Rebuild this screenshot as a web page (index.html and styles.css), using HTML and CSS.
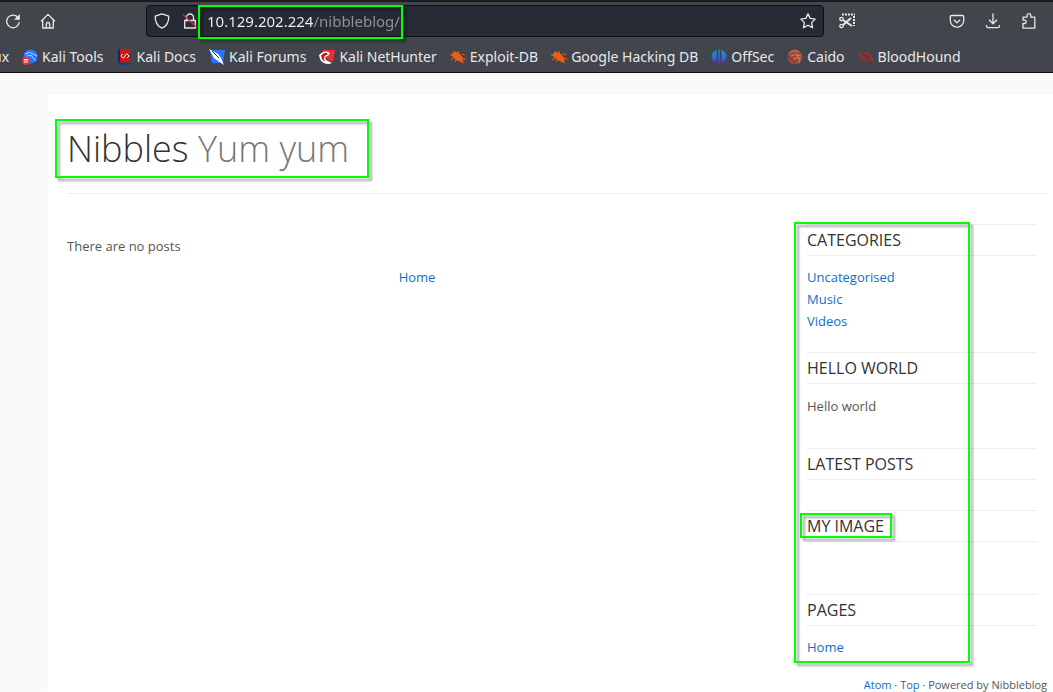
FILE: index.html
```html
<!DOCTYPE html>
<html lang="en">
<head>
<meta charset="utf-8">
<title>Nibbles - Yum yum</title>
<link rel="stylesheet" href="styles.css">
</head>
<body>
<header class="browser">
  <div class="toolbar">
    <button class="tool" type="button" aria-label="Reload"><svg class="icon" viewBox="0 0 16 16"><path d="M13.200 4.800A6.300 6.300 0 1 0 14.300 9"/><path d="M14.800 1v5.800H9z" fill="currentColor" stroke="none"/></svg></button>
    <button class="tool tool-home" type="button" aria-label="Home"><svg class="icon" viewBox="0 0 16 16"><path d="M1 8.200 8 1.400l7 6.800M2.700 7v8h10.600V7M6.300 15v-3.800a1.700 1.700 0 0 1 3.400 0V15"/></svg></button>
    <div class="urlbar">
      <svg class="icon" viewBox="0 0 16 16"><path d="M8 .9 14.700 3.200c.3 5.200-1.600 9.600-6.700 12C2.900 12.800 1 8.400 1.300 3.200z"/></svg>
      <svg class="icon icon-lock" viewBox="0 0 16 16"><path d="M4.500 7.500V4.500a3.500 3.500 0 0 1 7 0v3M2.700 7.500h10.600V15H2.700z"/><path d="M1 1.500 15 14.500" stroke="#e22850"/></svg>
      <div class="address">
        <input class="address-input" type="text" value="10.129.202.224/nibbleblog/" aria-label="Address">
        <span class="mark mark-address"></span>
      </div>
      <button class="tool" type="button" aria-label="Bookmark this page"><svg class="icon" viewBox="0 0 16 16"><path d="m8 .9 2.200 4.500 5 .7-3.600 3.500.9 5L8 12.200l-4.500 2.400.9-5L.8 6.100l5-.7z"/></svg></button>
    </div>
    <button class="tool tool-clip" type="button" aria-label="Screenshot"><svg class="icon" viewBox="0 0 16 16"><path d="M3 1.500h13M15 3v10" stroke-width="2" stroke-dasharray="2 1"/><circle cx="2.500" cy="6" r="1.700"/><circle cx="2.500" cy="13" r="1.700"/><path d="m4 7 9 6M4 12l8-7" stroke-width="2"/></svg></button>
    <div class="tools-end">
      <button class="tool" type="button" aria-label="Save to Pocket"><svg class="icon" viewBox="0 0 16 16"><path d="M2.500 2.500h11q1.200 0 1.200 1.200V7.500a6.700 6.700 0 0 1-13.400 0V3.700q0-1.200 1.200-1.200z"/><path d="M4.800 6.700 8 9.700l3.200-3"/></svg></button>
      <button class="tool" type="button" aria-label="Downloads"><svg class="icon" viewBox="0 0 16 16"><path d="M8 .5v10M4 6.800l4 4 4-4M1.500 12v1q0 1.700 1.700 1.700h9.600q1.700 0 1.700-1.700v-1"/></svg></button>
      <button class="tool" type="button" aria-label="Extensions"><svg class="icon" viewBox="0 0 16 16"><path d="M2 15.200v-4.700h1.500a1.700 1.700 0 0 0 0-3.400H2V4.200h4V2.600a1.900 1.900 0 0 1 3.800 0v1.600h4v11z"/></svg></button>
    </div>
  </div>
  <nav class="bookmarks" aria-label="Bookmarks">
    <a class="bookmark bookmark-cut" href="#">ux</a>
    <a class="bookmark" href="#"><svg class="fav" viewBox="0 0 16 16"><circle cx="8.500" cy="7.500" r="7" fill="#2777ff"/><path d="M3 5q5-3 8 0l4 2M5 7q5-2 6 2l3 3" stroke="#bcd6ff" fill="none"/><circle cx="4" cy="12" r="4" fill="#e33"/><path d="M2 10.500h4M3 10.500V14M5 10.500V14" stroke="#fff"/></svg>Kali Tools</a>
    <a class="bookmark" href="#"><svg class="fav" viewBox="0 0 16 16"><path d="M1 0h12v15H1z" fill="#d31212"/><path d="M1 0h2v15H1z" fill="#0b2d70"/><path d="M1 13.500h12V16H1z" fill="#16408f"/><path d="m5.500 5-1.500 2 2 2M10 5l2 2-2 2M9.500 4.500 6.500 9.500" stroke="#fff" fill="none"/></svg>Kali Docs</a>
    <a class="bookmark" href="#"><svg class="fav" viewBox="0 0 16 16"><path d="M1 1h15l-2 13H3z" fill="#2777ff"/><path d="M0 0 9 5l3 4 3 7-6-4-4-3z" fill="#fff"/><path d="m3 2 7 7" stroke="#333"/></svg>Kali Forums</a>
    <a class="bookmark" href="#"><svg class="fav" viewBox="0 0 16 16"><path d="M3 1h13l-2 12-6-3z" fill="#f02b35"/><path d="M0 6q6-6 11-2l-2 3q-4 0-2 4l6 3-3 1q-7 0-9-5z" fill="#fff"/><path d="M2 6.500q5-5 7-1-6 1-3 7-3-1-4-6z" fill="#c9101c"/></svg>Kali NetHunter</a>
    <a class="bookmark" href="#"><svg class="fav" viewBox="0 0 16 16"><path d="M2 4q5-3 9 2 3 4 2 7-5 0-9-4Q1 7 2 4z" fill="#ee5d16"/><path d="m0 6 4 1m0-5 2 4m2-4 1 4m3-1 3 1m-4 3 5 1M1 11l4-3m0 5 2-4m3 3 4 2" stroke="#ee5d16"/></svg>Exploit-DB</a>
    <a class="bookmark" href="#"><svg class="fav" viewBox="0 0 16 16"><path d="M2 4q5-3 9 2 3 4 2 7-5 0-9-4Q1 7 2 4z" fill="#ee5d16"/><path d="m0 6 4 1m0-5 2 4m2-4 1 4m3-1 3 1m-4 3 5 1M1 11l4-3m0 5 2-4m3 3 4 2" stroke="#ee5d16"/></svg>Google Hacking DB</a>
    <a class="bookmark" href="#"><svg class="fav" viewBox="0 0 16 16"><defs><linearGradient id="offsec" x1="0" y1="0" x2="0" y2="1"><stop offset="0" stop-color="#0aa5d8"/><stop offset="1" stop-color="#5432d6"/></linearGradient></defs><path d="M5.500 1v13Q.5 12 .5 7.500T5.500 1zM7.300.5h1.400V15H7.300zM10.500 1q5 2 5 6.500t-5 6.500z" fill="url(#offsec)"/></svg>OffSec</a>
    <a class="bookmark" href="#"><svg class="fav" viewBox="0 0 16 16"><circle cx="8" cy="8" r="7.500" fill="#9c4a3c"/><path d="M2 4q5-4 10-1M4 7q4-3 10 0M9 6q5 2 3 8M6 11q3-4 8-1" stroke="#d18652" fill="none"/><path d="M1 8q4 1 7 6" stroke="#6f2830" fill="none"/></svg>Caido</a>
    <a class="bookmark" href="#"><svg class="fav" viewBox="0 0 16 16"><path d="M0 1q1 4 4 3 7-3 10 3l2 5-2-1-1 2-3-1-2 1-3-1-3 1 1-3-2-3z" fill="#8f3035"/><path d="m4 7 3-1 2 2 3-1M5 10l3-1 3 2" stroke="#55333a" fill="none"/></svg>BloodHound</a>
  </nav>
</header>

<div class="page">
  <header class="masthead">
    <h1 class="title">Nibbles <span class="slogan">Yum yum</span><span class="mark mark-title"></span></h1>
  </header>
  <div class="columns">
    <main class="posts">
      <p class="empty">There are no posts</p>
      <nav class="pager"><a href="#">Home</a></nav>
    </main>
    <aside class="sidebar">
      <section class="widget"><h2 class="widget-title">Categories</h2>
        <ul class="widget-body"><li><a href="#">Uncategorised</a></li><li><a href="#">Music</a></li><li><a href="#">Videos</a></li></ul></section>
      <section class="widget"><h2 class="widget-title">Hello world</h2>
        <div class="widget-body widget-text"><p>Hello world</p></div></section>
      <section class="widget"><h2 class="widget-title">Latest posts</h2>
        <div class="widget-body"></div></section>
      <section class="widget"><h2 class="widget-title"><span class="marked">My image<span class="mark mark-image"></span></span></h2>
        <div class="widget-body widget-image"></div></section>
      <section class="widget"><h2 class="widget-title">Pages</h2>
        <ul class="widget-body"><li><a href="#">Home</a></li></ul></section>
      <span class="mark mark-sidebar"></span>
    </aside>
  </div>
  <footer class="footer"><a href="#">Atom</a> · <a href="#">Top</a> · Powered by Nibbleblog</footer>
</div>
</body>
</html>
```
FILE: styles.css
```css
* { box-sizing: border-box; }

body {
  margin: 0;
  background: #fafafa;
  color: #555;
  font: 13px/22px "Open Sans", sans-serif;
}

a { color: #0d6fc8; text-decoration: none; }
h1, h2, p, ul { margin: 0; padding: 0; font-weight: 400; }
ul { list-style: none; }

/* Browser chrome */
.browser {
  background: #42454c;
  border-top: 2px solid #1b1c20;
  border-bottom: 1px solid #0b0b0d;
  color: #e8e8ea;
  font-family: "Noto Sans", sans-serif;
}

.toolbar {
  display: flex;
  align-items: center;
  padding: 3px 16px 3px 5px;
}

.tool {
  display: flex;
  padding: 0;
  border: 0;
  background: none;
  color: inherit;
}

.tool-home { margin-left: 19px; }
.tool-clip { margin-left: 15px; }

.icon {
  display: block;
  flex: none;
  width: 16px;
  height: 16px;
  fill: none;
  stroke: currentColor;
  stroke-width: 1.3;
  stroke-linejoin: round;
  stroke-linecap: butt;
}

.urlbar {
  display: flex;
  flex: 1;
  align-items: center;
  max-width: 678px;
  height: 32px;
  margin-left: 90px;
  padding: 0 7px;
  border: 1px solid #0e0f12;
  border-radius: 4px;
  background: #272934;
}

.icon-lock { margin-left: 12px; }

.address {
  position: relative;
  flex: 1;
  margin: 0 12px 0 9px;
}

.address-input {
  display: block;
  width: 100%;
  height: 24px;
  padding: 0;
  border: 0;
  outline: 0;
  background: linear-gradient(90deg, #f5f5f6 106px, #93949a 106px);
  background-clip: text;
  -webkit-background-clip: text;
  color: transparent;
  font: 15px/24px "Noto Sans", sans-serif;
}

.tools-end {
  display: flex;
  gap: 20px;
  margin-left: auto;
}

.bookmarks {
  display: flex;
  gap: 13px;
  height: 32px;
  padding-top: 2px;
  align-items: center;
  white-space: nowrap;
  overflow: hidden;
}

.bookmark {
  display: flex;
  align-items: center;
  gap: 4px;
  color: inherit;
  font-size: 14px;
}

.bookmark-cut { margin-left: -7px; }

.fav { flex: none; width: 16px; height: 16px; }

/* Blog page */
.page {
  margin: 21px 0 0 47px;
  padding: 25px 6px 0 20px;
  background: #fff;
  box-shadow: 0 0 2px #eee;
}

.masthead {
  padding-bottom: 15px;
  border-bottom: 1px solid #eee;
}

.title {
  position: relative;
  width: max-content;
  color: #333;
  font-size: 36px;
  font-weight: 300;
  line-height: 59px;
}

.slogan { color: #777; }

.columns {
  display: flex;
  gap: 40px;
  padding: 30px 10px 0 0;
}

.posts { flex: 1; padding-top: 11px; }
.pager { margin-top: 9px; text-align: center; }

.sidebar { position: relative; width: 230px; }

.widget-title {
  border: solid #eee;
  border-width: 1px 0;
  color: #333;
  font-size: 16px;
  line-height: 30px;
  text-transform: uppercase;
}

.widget-body { padding: 10px 0 20px; }
.widget-text { padding: 11px 0 31px; }
.widget-image { min-height: 52px; }

.footer { font-size: 11px; line-height: 14px; text-align: right; }

/* Highlight frames drawn over the content */
.marked { position: relative; }

.mark {
  position: absolute;
  border: 2px solid #0f0;
  filter: drop-shadow(3px 3px 1px rgba(0, 0, 0, 0.35));
  pointer-events: none;
}

.mark-address { top: -4px; bottom: -6px; left: -9px; width: 205px; }
.mark-title { inset: 0 -20px 0 -12px; }
.mark-image { inset: -2px -8px -1px -7px; }
.mark-sidebar { top: -2px; bottom: 15px; left: -13px; width: 176px; }
```
